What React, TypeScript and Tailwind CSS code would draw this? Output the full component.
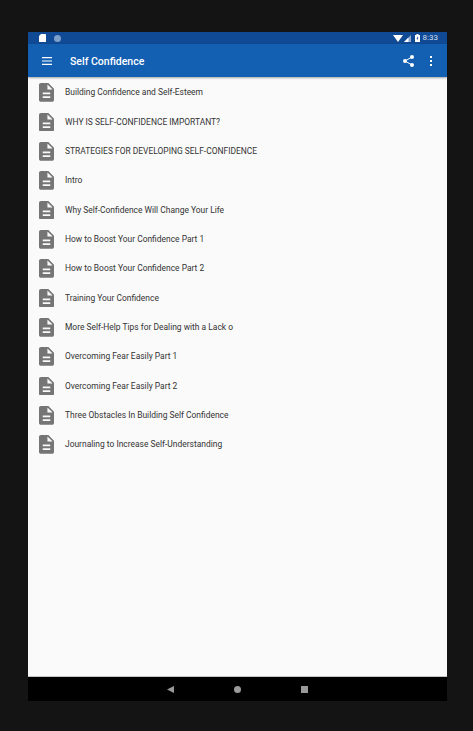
const chapters = [
  'Building Confidence and Self-Esteem',
  'WHY IS SELF-CONFIDENCE IMPORTANT?',
  'STRATEGIES FOR DEVELOPING SELF-CONFIDENCE',
  'Intro',
  'Why Self-Confidence Will Change Your Life',
  'How to Boost Your Confidence Part 1',
  'How to Boost Your Confidence Part 2',
  'Training Your Confidence',
  'More Self-Help Tips for Dealing with a Lack o',
  'Overcoming Fear Easily Part 1',
  'Overcoming Fear Easily Part 2',
  'Three Obstacles In Building Self Confidence',
  'Journaling to Increase Self-Understanding',
];

function DocIcon() {
  return (
    <svg width="15" height="18.750" viewBox="4 2 16 20" className="shrink-0">
      <path
        d="M14 2H6c-1.100 0-2 .9-2 2v16c0 1.100.9 2 2 2h12c1.100 0 2-.9 2-2V8l-6-6zm2 16H8v-2h8v2zm0-4H8v-2h8v2zm-3-5V3.500L18.500 9H13z"
        fill="#757575"
      />
    </svg>
  );
}

function StatusBar() {
  return (
    <div className="h-3 bg-[#104a94] flex items-center justify-between pl-[11px] pr-[9px] shrink-0">
      <div className="flex items-center gap-[8px]">
        <svg width="7" height="8" viewBox="0 0 7 8">
          <path d="M2 0H6.5a.5.5 0 0 1 .5.5V7.5a.5.5 0 0 1-.5.5H.5a.5.5 0 0 1-.5-.5V2Z" fill="#fff" />
        </svg>
        <div className="w-[7px] h-[7px] rounded-full bg-[#7f9fcb]" />
      </div>
      <div className="flex items-center">
        <svg width="10" height="7" viewBox="0 0 10 7">
          <path d="M0 0H10L5 7Z" fill="#fff" />
        </svg>
        <svg width="7" height="7" viewBox="0 0 7 7" className="ml-[1px]">
          <path d="M7 0V7H0Z" fill="#8ea9cd" />
          <path d="M4.5 2.5V7H0Z" fill="#fff" />
        </svg>
        <svg width="5" height="8" viewBox="0 0 5 8" className="ml-[4px]">
          <path d="M1.5 0H3.500V1H5V8H0V1H1.500Z" fill="#fff" />
          <path d="M2.800 2L1.500 4.500H2.300L2 6.500L3.500 3.700H2.600Z" fill="#104a94" />
        </svg>
        <span className="ml-[3px] text-[8px] leading-none text-[#d5dfee] font-['Roboto',sans-serif]">8:33</span>
      </div>
    </div>
  );
}

function Toolbar() {
  return (
    <div className="h-[33px] bg-[#1360b3] flex items-center shrink-0 shadow-[0_1px_2px_rgba(0,0,0,0.35)] z-10">
      <svg width="10" height="8" viewBox="0 0 10 8" className="ml-[14px]">
        <path d="M0 0H10V1.200H0ZM0 3.400H10V4.600H0ZM0 6.800H10V8H0Z" fill="#fff" />
      </svg>
      <span className="ml-[18px] pt-[2px] text-[10.500px] font-medium text-white font-['Roboto',sans-serif]">Self Confidence</span>
      <svg width="11" height="12" viewBox="0 0 11 12" className="ml-auto mt-[1px]">
        <path d="M9 2L2 6L9 10" stroke="#fff" strokeWidth="1" fill="none" />
        <circle cx="9" cy="2" r="2" fill="#fff" />
        <circle cx="2" cy="6" r="2" fill="#fff" />
        <circle cx="9" cy="10" r="2" fill="#fff" />
      </svg>
      <div className="ml-[16px] mr-[15px] flex flex-col gap-[2px]">
        <div className="w-[2px] h-[2px] bg-white" />
        <div className="w-[2px] h-[2px] bg-white" />
        <div className="w-[2px] h-[2px] bg-white" />
      </div>
    </div>
  );
}

export default function App() {
  return (
    <div className="w-[473px] h-[731px] bg-[#141414] pt-[32px] pb-[30px] px-[28px] overflow-hidden font-['Roboto',sans-serif]">
      <div className="w-[419px] h-[669px] flex flex-col">
        <StatusBar />
        <Toolbar />
        <div className="flex-1 bg-[#fafafa] pl-[11px] pt-[1px] overflow-hidden">
          {chapters.map(title => (
            <div key={title} className="h-[29.330px] flex items-center">
              <DocIcon />
              <span className="ml-[11px] text-[8.450px] text-[#333333] whitespace-nowrap">{title}</span>
            </div>
          ))}
        </div>
        <div className="h-[24px] bg-black border-t border-[#c4c4c4] flex items-center justify-center gap-[60px] shrink-0 box-content -mt-[1px]">
          <svg width="7" height="7" viewBox="0 0 7 7">
            <path d="M7 0V7L0 3.500Z" fill="#9a9a9a" />
          </svg>
          <div className="w-[7px] h-[7px] rounded-full bg-[#9a9a9a]" />
          <div className="w-[7px] h-[7px] bg-[#9a9a9a]" />
        </div>
      </div>
    </div>
  );
}
